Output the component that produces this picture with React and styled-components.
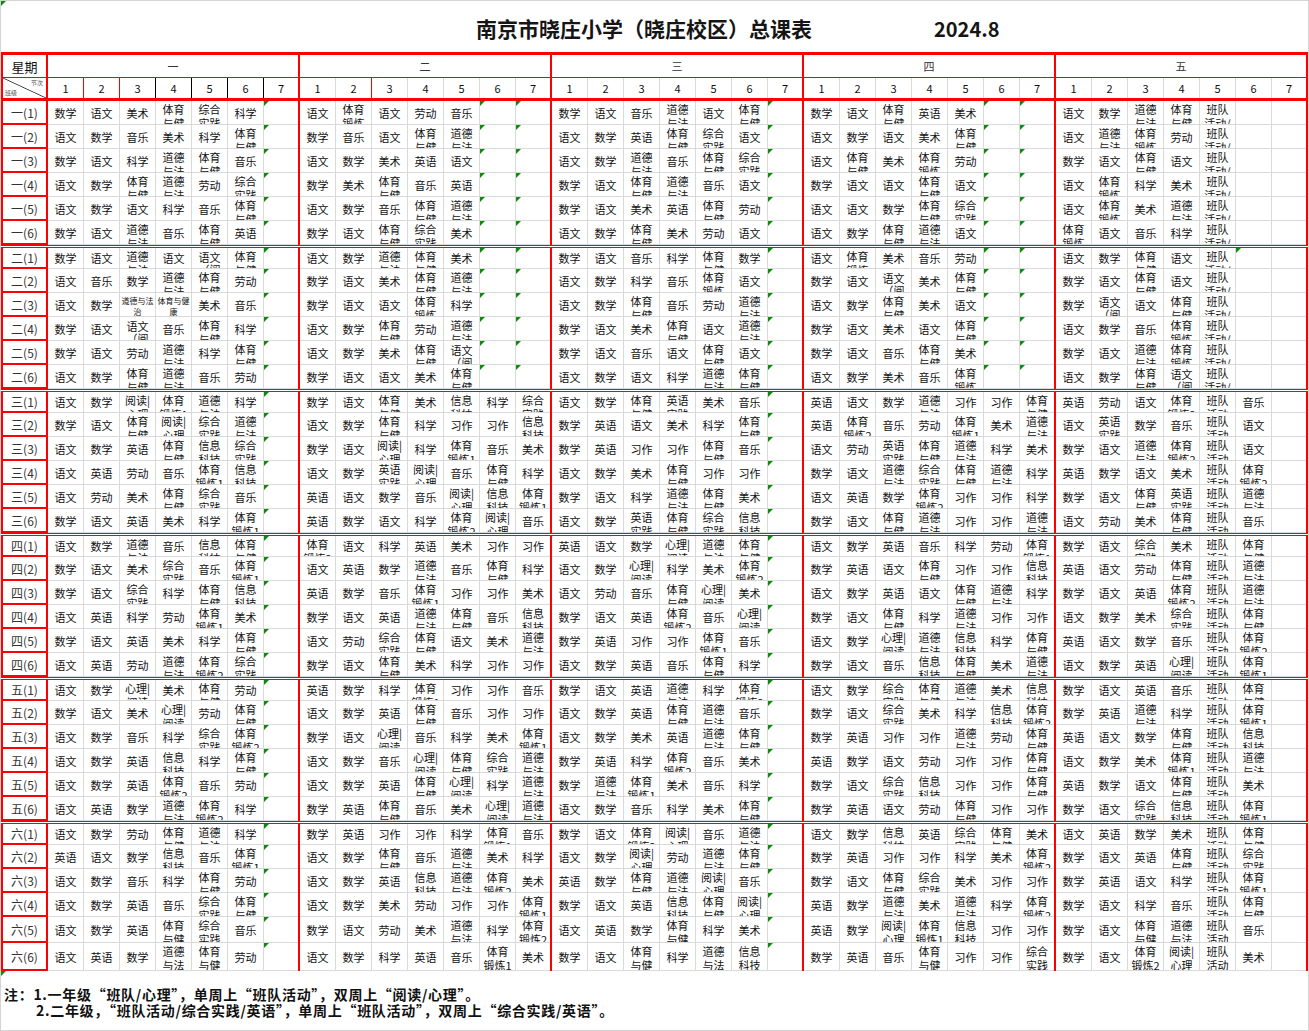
import React from "react";
import styled, { createGlobalStyle, css } from "styled-components";

const RED = "#ff0000";
const GRID = "#d9d9d9";
const FLAG = "#0b8a0b";

const GlobalStyle = createGlobalStyle`
  html, body {
    margin: 0;
    padding: 0;
    background: #fff;
  }
  body {
    font-family: "Noto Sans CJK SC", "Noto Sans", sans-serif;
    color: #111;
  }
  * {
    box-sizing: border-box;
  }
`;

const flagMark = css`
  &::before {
    content: "";
    position: absolute;
    left: 0;
    top: 0;
    border-top: 5px solid ${FLAG};
    border-right: 5px solid transparent;
  }
`;

const Sheet = styled.div`
  width: 1309px;
  height: 1031px;
  border: 1px solid #d4d4d4;
  background: #fff;
  overflow: hidden;
`;

const TitleBar = styled.header`
  position: relative;
  height: 51px;
  display: flex;
  align-items: center;
  padding: 3px 0 0 475px;
  ${flagMark}
  h1 {
    margin: 0;
    font-size: 21px;
    font-weight: 700;
    color: #151515;
  }
  span {
    margin-left: 122px;
    font-size: 20px;
    font-weight: 700;
    color: #151515;
  }
`;

const Table = styled.section`
  border-top: 3px solid ${RED};
`;

const HeadRow = styled.div`
  display: grid;
  grid-template-columns: 47px repeat(5, 252px);
  grid-template-rows: minmax(0, 1fr);
  height: 23px;
  border-bottom: ${(p) => (p.$thick ? `3px solid ${RED}` : `1px solid ${RED}`)};
`;

const WeekCell = styled.div`
  border-left: 2px solid ${RED};
  border-right: 2px solid ${RED};
  display: flex;
  align-items: center;
  justify-content: center;
  font-size: 13px;
  color: #111;
`;

const DayTitle = styled.div`
  border-right: 2px solid ${RED};
  display: flex;
  align-items: center;
  justify-content: center;
  font-size: 11px;
  color: #333;
`;

const CornerCell = styled.div`
  border-left: 2px solid ${RED};
  border-right: 2px solid ${RED};
  background: linear-gradient(
    to top right,
    transparent calc(50% - 0.8px),
    #333 50%,
    transparent calc(50% + 0.8px)
  );
  display: flex;
  flex-direction: column;
  justify-content: space-between;
  padding: 1px 3px 2px 2px;
  font-size: 6px;
  line-height: 7px;
  color: #555;
  span:first-child {
    align-self: flex-end;
  }
`;

const DayBlock = styled.div`
  display: grid;
  grid-template-columns: repeat(6, 36px) 1fr;
  grid-template-rows: minmax(0, 1fr);
  min-height: 0;
  border-right: 2px solid ${RED};
`;

const NumCell = styled.div`
  display: flex;
  align-items: center;
  justify-content: center;
  font-size: 11px;
  color: #111;
  &:not(:last-child) {
    border-right: 1px solid ${(p) => p.$edge || GRID};
  }
`;

const Row = styled.div`
  display: grid;
  grid-template-columns: 47px repeat(5, 252px);
  grid-template-rows: minmax(0, 1fr);
  height: ${(p) => p.$h}px;
  overflow: hidden;
  border-top: ${(p) => (p.$split ? `3px double ${RED}` : "none")};
`;

const ClassCell = styled.div`
  border-left: 2px solid ${RED};
  border-right: 2px solid ${RED};
  border-bottom: 2px solid ${RED};
  display: flex;
  align-items: center;
  justify-content: center;
  font-size: 12px;
  color: #333;
`;

const kinds = {
  one: css`
    justify-content: center;
    font-size: 11px;
    line-height: 14px;
  `,
  two: css`
    justify-content: flex-start;
    padding-top: 1px;
    font-size: 11px;
    line-height: 14px;
  `,
  tight: css`
    justify-content: flex-start;
    padding-top: 3px;
    font-size: 11px;
    line-height: 12px;
  `,
  small: css`
    justify-content: flex-start;
    padding-top: 2px;
    font-size: 8px;
    line-height: 11px;
  `,
};

const Cell = styled.div`
  position: relative;
  overflow: hidden;
  min-height: 0;
  display: flex;
  flex-direction: column;
  align-items: center;
  border-bottom: 1px solid ${GRID};
  color: #111;
  &:not(:last-child) {
    border-right: 1px solid ${GRID};
  }
  ${(p) => kinds[p.$kind]}
  ${(p) => p.$flag && flagMark}
`;

const Line = styled.span`
  display: block;
  flex: none;
  white-space: nowrap;
`;

const Notes = styled.footer`
  position: relative;
  padding: 15px 0 0 3px;
  font-size: 14px;
  font-weight: 700;
  line-height: 16px;
  letter-spacing: 0.7px;
  color: #111;
  ${flagMark}
  p {
    margin: 0;
  }
  p + p {
    padding-left: 32px;
  }
`;

const SUBJECTS = {
  S: ["数学"], Y: ["语文"], M: ["美术"], U: ["音乐"], L: ["劳动"], K: ["科学"], E: ["英语"], X: ["习作"],
  T: ["体育", "与健"], Z: ["综合", "实践"], D: ["道德", "与法"], I: ["信息", "科技"],
  B: ["体育", "锻炼"], B1: ["体育", "锻炼1"], B2: ["体育", "锻炼2"],
  R: ["阅读|", "心理"], P: ["心理|", "阅读"], A: ["英语", "实践"],
  W: ["语文", "（阅"], V: ["班队", "活动/"], V3: ["班队", "活动"],
  d: ["道德与法", "治"], t: ["体育与健", "康"], _: [],
};

// one string per class: days split by "|", periods by spaces
const SCHEDULE = [
  [
    "S Y M T Z K _|Y B Y L U _ _|S Y U D Y T _|S Y T E M _ _|Y S D T V _ _",
    "Y S U M K T _|S U Y T D _ _|Y S E T Z Y _|Y S Y M T _ _|Y D B L V _ _",
    "S Y K D T U _|Y S M E Y _ _|Y S D U T Z _|Y T M B L _ _|S Y T Y V _ _",
    "Y S T D L Z _|S M T U E _ _|S Y T D U Y _|S Y Y T Y _ _|Y B K M V _ _",
    "Y S Y K U T _|Y S U T D _ _|S Y M E T L _|Y Y S T Z _ _|Y B M D V _ _",
    "S Y D U T E _|S Y T Z M _ _|Y S T M L Y _|Y S T D Y _ _|B Y U K V _ _",
  ],
  [
    "S Y D Y W T _|Y S D T M _ _|S Y U K T S _|Y B M U L _ _|Y S T Y V _ _",
    "Y U S D T L _|S Y M T D _ _|Y S K U B Y _|S Y W M T _ _|S Y T Y V _ _",
    "Y S d t M U _|S Y Y B K _ _|Y S T U L D _|Y S T M Y _ _|S W Y T V _ _",
    "S Y W U T K _|Y S T L D _ _|S Y M T Y D _|S Y M Y T _ _|Y S U B V _ _",
    "S Y L D K T _|Y S M T W _ _|S Y U Y T Y _|S Y U T M _ _|S Y D B V _ _",
    "Y S T D U L _|S Y Y M T _ _|Y S Y K D T _|Y S M U B _ _|Y S T W V _ _",
  ],
  [
    "Y S R B1 D K _|S Y T M I K Z|Y S T A M U _|E Y S D X X T|E L Y B2 V3 U _",
    "S Y T R Z D _|Y S T K X X I|S E Y M K T _|E B2 U L B1 M D|Y A S U V3 Y _",
    "Y S E T I Z _|S Y R K B1 U M|S E X X T U _|Y L A T D K M|S Y D B2 V3 Y _",
    "Y E L U B1 I _|Y S A R U T K|Y S M T X X _|S Y D Z T D K|E S Y M V3 B2 _",
    "Y L M T Z U _|E Y S U R I B1|S Y K D T M _|Y E S B2 X X K|S Y T A V3 D _",
    "S Y E M K B1 _|E S Y K B2 R U|Y S A T Z I _|S Y T D X X D|Y L M T V3 U _",
  ],
  [
    "Y S D U I T _|B2 Y K E M X X|E Y S P D T _|Y S E U K L B1|S Y Z M V3 T _",
    "S Y M Z U B1 _|Y E S D U T K|Y S P K M B2 _|S E Y T X X I|E Y L T V3 D _",
    "S Y Z K T I _|E S U B1 X X M|Y L U T P M _|Y S E Y T D K|S Y E B2 V3 D _",
    "Y E K L B1 M _|S Y E D T U I|S Y E B2 U P _|S Y T K D X X|Y S M Z V3 T _",
    "S Y E M K T _|Y L Z T Y M D|S E X X B1 U _|Y S P D I K T|E Y S U V3 B2 _",
    "Y E L D B2 Z _|S Y T M K X X|Y S E U T K _|S Y U I T M D|Y S E P V3 B1 _",
  ],
  [
    "Y S P M T L _|E S K B1 X X U|S Y E D K B2 _|Y S Z T D M I|S Y E U V3 T _",
    "S Y M P L T _|Y S E T U X X|Y S E T D U _|S Y Z M K I B2|S E D K V3 B1 _",
    "Y S U K Z B2 _|S Y P U K M B1|Y S M E D T _|S E X X D L T|E Y S T V3 I _",
    "Y S E I K T _|Y S U P T Z D|S E K B2 U M _|E S Y L X X T|Y S M B1 V3 D _",
    "Y S E B2 U L _|Y S E T P K D|S D B1 M U K _|S Y Z I X X T|E S Y T V3 M _",
    "Y E S D B2 K _|S E T U M P D|Y S U K M T _|S E Y L T X X|S Y Z I V3 B1 _",
  ],
  [
    "Y S L T D K _|S E X X K B1 U|S Y B2 R U D _|Y S I E Z T M|Y E S M V3 T _",
    "E Y S I U B1 _|Y S T U D M K|Y S R L D T _|S E X X K M B2|S Y E T V3 Z _",
    "Y S U K T L _|Y S E I D B2 M|E S T D R U _|S Y T Z M X X|S E Y K V3 B1 _",
    "Y S E U Z T _|Y S M L X X B1|S Y E I T R _|E S D M D K B2|S Y K U V3 T _",
    "Y S E T Z U _|S Y L M D K B2|Y E S T K M _|E S R B1 I X X|S Y T D V3 U _",
    "Y E S D T L _|Y S K E U B1 M|S Y T K D I _|S E U T X X Z|S Y B2 R V3 M _",
  ],
];

const DAYS = ["一", "二", "三", "四", "五"];
const GRADES = ["一", "二", "三", "四", "五", "六"];

function kindOf(code) {
  if (code === "d" || code === "t") return "small";
  if (code === "W") return "tight";
  return SUBJECTS[code].length === 2 ? "two" : "one";
}

function hasFlag(g, r, d, c) {
  if ((d === 0 || d === 2) && c === 6) return true;
  if (g < 2 && (d === 1 || d === 3) && c >= 5) return true;
  return g === 1 && r === 0 && d === 4 && c === 5;
}

function numEdge(d, c) {
  if (d === 0 && c < 2) return RED;
  if (d === 0) return "#000";
  if (d === 1 && c === 1) return RED;
  return undefined;
}

function rowHeight(g, r) {
  if (g === 5 && r === 4) return 26;
  if (g === 5 && r === 5) return 28;
  return 24;
}

function Lesson({ code, flag }) {
  return (
    <Cell $kind={kindOf(code)} $flag={flag}>
      {SUBJECTS[code].map((t, i) => (
        <Line key={i}>{t}</Line>
      ))}
    </Cell>
  );
}

function ClassRow({ g, r, text }) {
  const days = text.split("|").map((d) => d.split(" "));
  return (
    <Row $h={rowHeight(g, r)} $split={g > 0 && r === 0}>
      <ClassCell>{`${GRADES[g]}(${r + 1})`}</ClassCell>
      {days.map((codes, d) => (
        <DayBlock key={d}>
          {codes.map((code, c) => (
            <Lesson key={c} code={code} flag={hasFlag(g, r, d, c)} />
          ))}
        </DayBlock>
      ))}
    </Row>
  );
}

export default function App() {
  return (
    <>
      <GlobalStyle />
      <Sheet>
        <TitleBar>
          <h1>南京市晓庄小学（晓庄校区）总课表</h1>
          <span>2024.8</span>
        </TitleBar>
        <Table>
          <HeadRow>
            <WeekCell>星期</WeekCell>
            {DAYS.map((d) => (
              <DayTitle key={d}>{d}</DayTitle>
            ))}
          </HeadRow>
          <HeadRow $thick>
            <CornerCell>
              <span>节次</span>
              <span>班级</span>
            </CornerCell>
            {DAYS.map((d, di) => (
              <DayBlock key={d}>
                {[1, 2, 3, 4, 5, 6, 7].map((n, c) => (
                  <NumCell key={n} $edge={numEdge(di, c)}>
                    {n}
                  </NumCell>
                ))}
              </DayBlock>
            ))}
          </HeadRow>
          {SCHEDULE.map((rows, g) =>
            rows.map((text, r) => <ClassRow key={`${g}-${r}`} g={g} r={r} text={text} />)
          )}
        </Table>
        <Notes>
          <p>注：1.一年级“班队/心理”，单周上“班队活动”，双周上“阅读/心理”。</p>
          <p>2.二年级，“班队活动/综合实践/英语”，单周上“班队活动”，双周上“综合实践/英语”。</p>
        </Notes>
      </Sheet>
    </>
  );
}
